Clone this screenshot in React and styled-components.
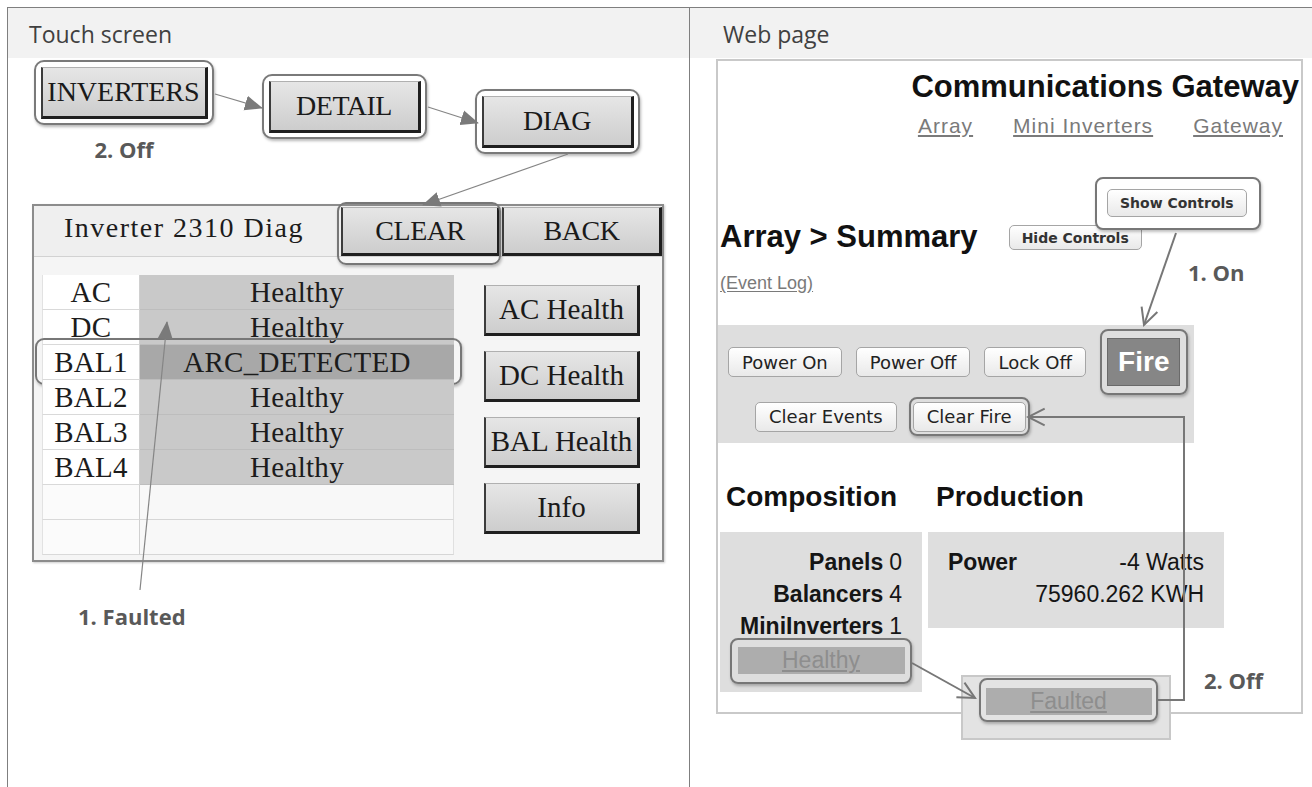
import React from "react";
import styled, { createGlobalStyle } from "styled-components";

const Global = createGlobalStyle`
  html, body { margin: 0; padding: 0; background: #fff; }
  body { overflow: hidden; font-family: "Open Sans", "Liberation Sans", sans-serif; }
`;

const Figure = styled.div`
  position: relative;
  margin: 7px 0 0 7px;
  width: 1305px;
  height: 790px;
  border-top: 1px solid #7f7f7f;
  border-left: 1px solid #7f7f7f;
  display: grid;
  grid-template-columns: 681px 1fr;
  grid-template-rows: 50px 1fr;
`;

const HeadCell = styled.div`
  background: #f2f2f2;
  color: #404040;
  font: 400 23px/48px "Open Sans", sans-serif;
  padding: 2px 0 0 ${(p) => p.$pad}px;
  box-sizing: border-box;
  border-left: ${(p) => (p.$divider ? "1px solid #7f7f7f" : "none")};
`;

/* ---------- touch screen column ---------- */
const TouchCell = styled.div`
  padding-top: 2px;
  display: flex;
  flex-direction: column;
  align-items: flex-start;
`;

const StepRow = styled.div`
  display: flex;
  align-items: flex-start;
  gap: 48px;
  padding-left: 26px;
`;

const StepCol = styled.div`
  display: flex;
  flex-direction: column;
  align-items: center;
  margin-top: ${(p) => p.$drop || 0}px;
`;

const Ring = styled.div`
  border: 2.5px solid #7a7a7a;
  border-radius: 10px;
  padding: 4.5px;
  background: #fff;
  box-shadow: 1px 2px 3px rgba(0, 0, 0, 0.28);
`;

const BevelButton = styled.div`
  box-sizing: border-box;
  display: flex;
  align-items: center;
  justify-content: center;
  background: linear-gradient(#e6e6e6, #cdcdcd);
  border-style: solid;
  border-width: 1px 3px 3px 2px;
  border-color: #b0b0b0 #1f1f1f #1f1f1f #3c3c3c;
  font-family: "Liberation Serif", "Times New Roman", serif;
  font-size: ${(p) => p.$fs || 28}px;
  letter-spacing: ${(p) => p.$ls ?? 0}px;
  color: #1a1a1a;
  white-space: nowrap;
`;

const StepButton = styled(BevelButton)`
  width: ${(p) => p.$w}px;
  height: 52px;
`;

const Callout = styled.div`
  font: 700 22px/1 "Open Sans", sans-serif;
  color: #595959;
  margin-top: ${(p) => p.$mt || 0}px;
  margin-left: ${(p) => p.$ml || 0}px;
`;

const FloatCallout = styled(Callout)`
  position: absolute;
  left: ${(p) => p.$x}px;
  top: ${(p) => p.$y}px;
  margin: 0;
`;

const Panel = styled.div`
  margin: 44px 0 0 24px;
  width: 632px;
  height: 358px;
  box-sizing: border-box;
  border: 2px solid #8c8c8c;
  background: #f5f5f5;
  display: flex;
  flex-direction: column;
  font-family: "Liberation Serif", "Times New Roman", serif;
  color: #1c1c1c;
  box-shadow: 1px 1px 2px rgba(0, 0, 0, 0.2);
`;

const PanelHead = styled.div`
  display: grid;
  grid-template-columns: 307px 159px 1fr;
  height: 51px;
  box-sizing: border-box;
  border-bottom: 1px solid #d2d2d2;
  background: #efefef;
`;

const PanelTitle = styled.div`
  padding: 8px 0 0 30px;
  font-size: 28px;
  line-height: 1;
  letter-spacing: 1.5px;
`;

const HeadSlot = styled.div`
  position: relative;
  padding: 1px 0 0 ${(p) => p.$gap || 0}px;
`;

const HeadButton = styled(BevelButton)`
  height: 49px;
`;

const OverRing = styled.div`
  position: absolute;
  top: ${(p) => p.$t}px;
  right: ${(p) => p.$r}px;
  bottom: ${(p) => p.$b}px;
  left: ${(p) => p.$l}px;
  border: 2.5px solid #777;
  border-radius: 9px;
  box-shadow: 1px 2px 3px rgba(0, 0, 0, 0.25);
  pointer-events: none;
`;

const PanelBody = styled.div`
  display: flex;
  padding: 18px 0 0 8px;
`;

const DiagTable = styled.div`
  width: 412px;
  display: flex;
  flex-direction: column;
`;

const DiagRow = styled.div`
  position: relative;
  display: grid;
  grid-template-columns: 98px 1fr;
  height: 35px;
  font-size: 29px;
  line-height: 34px;
  letter-spacing: 0.3px;
  text-align: center;
`;

const LabelCell = styled.div`
  background: ${(p) => (p.$blank ? "#fbfbfb" : "#fff")};
  border-right: 1px solid #d0d0d0;
  border-bottom: 1px solid #d9d9d9;
  border-left: 1px solid #e2e2e2;
`;

const toneBg = { ok: "#c9c9c9", alarm: "#a8a8a8", none: "#f8f8f8" };

const ValueCell = styled.div`
  background: ${(p) => toneBg[p.$tone]};
  border-bottom: 1px solid ${(p) => (p.$tone === "none" ? "#d6d6d6" : "#bdbdbd")};
  border-right: ${(p) => (p.$tone === "none" ? "1px solid #e0e0e0" : "none")};
`;

const SideCol = styled.div`
  display: flex;
  flex-direction: column;
  gap: 15px;
  margin-left: 30px;
  padding-top: 10px;
`;

const SideButton = styled(BevelButton)`
  width: 156px;
  height: 51px;
`;

/* ---------- web page column ---------- */
const WebCell = styled.div`
  border-left: 1px solid #7f7f7f;
  padding: 1px 0 0 26px;
`;

const Frame = styled.div`
  position: relative;
  width: 587px;
  height: 655px;
  box-sizing: border-box;
  border: 2px solid #c9c9c9;
  background: #fff;
  font-family: "Liberation Sans", Arial, sans-serif;
  color: #111;
  display: flex;
  flex-direction: column;
`;

const SiteTitle = styled.div`
  align-self: flex-end;
  margin: 10px 2px 0 0;
  font: 700 31px/1 "Liberation Sans", Arial, sans-serif;
`;

const Nav = styled.div`
  display: flex;
  justify-content: flex-end;
  gap: 40px;
  margin-top: 13px;
  padding-right: 18px;
`;

const Link = styled.span`
  font-size: ${(p) => p.$size || 21}px;
  line-height: 1;
  letter-spacing: ${(p) => (p.$wide ? 1 : 0)}px;
  color: #7a7a7a;
  text-decoration: underline;
  text-underline-offset: 2px;
`;

const SummaryRow = styled.div`
  display: flex;
  align-items: flex-start;
  gap: 31px;
  margin-top: 85px;
  padding-left: 2px;
`;

const SummaryTitle = styled.div`
  font: 700 31px/1 "Liberation Sans", Arial, sans-serif;
`;

const WebButton = styled.div`
  box-sizing: border-box;
  display: inline-flex;
  align-items: center;
  justify-content: center;
  height: ${(p) => p.$h || 30}px;
  margin-top: ${(p) => p.$mt || 0}px;
  padding: 0 ${(p) => p.$px || 13}px;
  border: 1px solid #a5a5a5;
  border-radius: 5px;
  background: linear-gradient(#ffffff, #e9e9e9);
  font-family: "DejaVu Sans", sans-serif;
  font-size: ${(p) => p.$fs || 18}px;
  font-weight: ${(p) => (p.$bold ? 700 : 400)};
  color: ${(p) => (p.$bold ? "#333" : "#222")};
  white-space: nowrap;
`;

const ShowRing = styled.div`
  position: absolute;
  left: 377px;
  top: 116px;
  border: 2.5px solid #777;
  border-radius: 8px;
  padding: 10px 12px 11px 10px;
  background: #fff;
  box-shadow: 1px 2px 3px rgba(0, 0, 0, 0.25);
`;

const EventLog = styled.div`
  margin-top: 22px;
  padding-left: 2px;
`;

const ControlsBox = styled.div`
  margin-top: 32px;
  width: 476px;
  background: #dedede;
  padding: 4px 0 7px 10px;
  box-sizing: border-box;
  display: flex;
  flex-direction: column;
  gap: 2px;
`;

const ControlRow = styled.div`
  display: flex;
  align-items: center;
  gap: ${(p) => p.$gap}px;
  padding-left: ${(p) => p.$indent || 0}px;
`;

const WebRing = styled.div`
  border: 2.5px solid #777;
  border-radius: 8px;
  padding: ${(p) => p.$pad};
  box-shadow: 1px 2px 3px rgba(0, 0, 0, 0.25);
`;

const FireButton = styled.div`
  width: 73px;
  height: 48px;
  box-sizing: border-box;
  display: flex;
  align-items: center;
  justify-content: center;
  background: #868686;
  border: 1px solid #6a6a6a;
  color: #fff;
  font: 700 28px/1 "Liberation Sans", Arial, sans-serif;
`;

const SectionGrid = styled.div`
  margin-top: 40px;
  padding-left: 2px;
  display: grid;
  grid-template-columns: 202px 296px;
  column-gap: 6px;
  row-gap: 21px;
  align-items: start;
`;

const SectionHead = styled.div`
  font: 700 28px/1 "Liberation Sans", Arial, sans-serif;
  padding-left: ${(p) => p.$pad}px;
`;

const StatBox = styled.div`
  background: #dedede;
  padding: ${(p) => p.$pad};
  display: flex;
  flex-direction: column;
`;

const StatLine = styled.div`
  display: flex;
  justify-content: ${(p) => p.$justify || "flex-end"};
  gap: 6px;
  padding-right: ${(p) => p.$pr || 0}px;
  font-size: 23px;
  line-height: 32px;
  color: #151515;
  b { font-weight: 700; }
`;

const StatusRing = styled.div`
  margin-top: ${(p) => p.$mt || 0}px;
  width: ${(p) => (p.$w ? `${p.$w}px` : "auto")};
  box-sizing: border-box;
  border: 2.5px solid #777;
  border-radius: 8px;
  padding: ${(p) => p.$pad};
  box-shadow: 1px 2px 3px rgba(0, 0, 0, 0.25);
`;

const StatusBar = styled.div`
  height: 27px;
  background: #adadad;
  text-align: center;
  font-size: 23px;
  line-height: 27px;
  color: #8e8e8e;
  text-decoration: underline;
`;

const FaultBox = styled.div`
  position: absolute;
  left: 243px;
  top: 614px;
  width: 210px;
  height: 65px;
  box-sizing: border-box;
  background: #e3e3e3;
  border: 2px solid #c8c8c8;
  padding: 1px 0 0 16px;
`;

const Overlay = styled.svg`
  position: absolute;
  left: 0;
  top: 0;
  pointer-events: none;
  overflow: visible;
`;

const rows = [
  ["AC", "Healthy", "ok"],
  ["DC", "Healthy", "ok"],
  ["BAL1", "ARC_DETECTED", "alarm"],
  ["BAL2", "Healthy", "ok"],
  ["BAL3", "Healthy", "ok"],
  ["BAL4", "Healthy", "ok"],
  ["", "", "none"],
  ["", "", "none"],
];

function Arrows() {
  const thin = { stroke: "#858585", strokeWidth: 1.2, fill: "none" };
  const thick = { stroke: "#777", strokeWidth: 2, fill: "none" };
  return (
    <Overlay width="1304" height="779" viewBox="8 8 1304 779">
      <defs>
        <marker id="solidHead" viewBox="0 0 10 10" refX="9.5" refY="5" markerWidth="18" markerHeight="18" markerUnits="userSpaceOnUse" orient="auto">
          <path d="M0,0.8 L10,5 L0,9.2 z" fill="#7a7a7a" />
        </marker>
        <marker id="openHead" viewBox="0 0 12 12" refX="11" refY="6" markerWidth="20" markerHeight="20" markerUnits="userSpaceOnUse" orient="auto">
          <path d="M1,1 L11,6 L1,11" fill="none" stroke="#777" strokeWidth="1.2" />
        </marker>
      </defs>
      <line x1="215" y1="94" x2="262" y2="108" {...thin} markerEnd="url(#solidHead)" />
      <line x1="428" y1="107" x2="478" y2="123" {...thin} markerEnd="url(#solidHead)" />
      <line x1="568" y1="154" x2="423" y2="205" {...thin} markerEnd="url(#solidHead)" />
      <line x1="140" y1="590" x2="167" y2="322" {...thin} markerEnd="url(#solidHead)" />
      <line x1="1176" y1="233" x2="1144" y2="325" {...thick} markerEnd="url(#openHead)" />
      <line x1="912" y1="663" x2="975" y2="698" {...thick} markerEnd="url(#openHead)" />
      <polyline points="1158,700 1184,700 1184,417 1028,417" {...thick} markerEnd="url(#openHead)" />
    </Overlay>
  );
}

export default function App() {
  return (
    <>
      <Global />
      <Figure>
        <HeadCell $pad={21}>Touch screen</HeadCell>
        <HeadCell $pad={33} $divider>Web page</HeadCell>

        <TouchCell>
          <StepRow>
            <StepCol>
              <Ring>
                <StepButton $w={167}>INVERTERS</StepButton>
              </Ring>
              <Callout $mt={13}>2. Off</Callout>
            </StepCol>
            <StepCol $drop={14}>
              <Ring>
                <StepButton $w={152} $ls={-0.5}>DETAIL</StepButton>
              </Ring>
            </StepCol>
            <StepCol $drop={29}>
              <Ring>
                <StepButton $w={152} $ls={-0.5}>DIAG</StepButton>
              </Ring>
            </StepCol>
          </StepRow>

          <Panel>
            <PanelHead>
              <PanelTitle>Inverter 2310 Diag</PanelTitle>
              <HeadSlot>
                <HeadButton $ls={-0.5}>CLEAR</HeadButton>
                <OverRing $t={-4} $r={-1} $b={-9} $l={-4} />
              </HeadSlot>
              <HeadSlot $gap={2}>
                <HeadButton $ls={-0.5}>BACK</HeadButton>
              </HeadSlot>
            </PanelHead>
            <PanelBody>
              <DiagTable>
                {rows.map(([label, value, tone], i) => (
                  <DiagRow key={i}>
                    <LabelCell $blank={tone === "none"}>{label}</LabelCell>
                    <ValueCell $tone={tone}>{value}</ValueCell>
                    {tone === "alarm" && <OverRing $t={-7} $r={-8} $b={-5} $l={-7} />}
                  </DiagRow>
                ))}
              </DiagTable>
              <SideCol>
                <SideButton $fs={29}>AC Health</SideButton>
                <SideButton $fs={29}>DC Health</SideButton>
                <SideButton $fs={29}>BAL Health</SideButton>
                <SideButton $fs={29}>Info</SideButton>
              </SideCol>
            </PanelBody>
          </Panel>

          <Callout $mt={43} $ml={70}>1. Faulted</Callout>
        </TouchCell>

        <WebCell>
          <Frame>
            <SiteTitle>Communications Gateway</SiteTitle>
            <Nav>
              <Link $wide>Array</Link>
              <Link $wide>Mini Inverters</Link>
              <Link $wide>Gateway</Link>
            </Nav>

            <ShowRing>
              <WebButton $h={28} $px={12} $fs={14} $bold>Show Controls</WebButton>
            </ShowRing>

            <SummaryRow>
              <SummaryTitle>Array &gt; Summary</SummaryTitle>
              <WebButton $h={25} $px={12} $fs={14} $mt={4} $bold>Hide Controls</WebButton>
            </SummaryRow>

            <EventLog>
              <Link $size={18}>(Event Log)</Link>
            </EventLog>

            <FloatCallout $x={470} $y={200}>1. On</FloatCallout>

            <ControlsBox>
              <ControlRow $gap={14}>
                <WebButton>Power On</WebButton>
                <WebButton>Power Off</WebButton>
                <WebButton>Lock Off</WebButton>
                <WebRing $pad="7px 5.5px">
                  <FireButton>Fire</FireButton>
                </WebRing>
              </ControlRow>
              <ControlRow $gap={12} $indent={27}>
                <WebButton>Clear Events</WebButton>
                <WebRing $pad="2.5px 2px">
                  <WebButton>Clear Fire</WebButton>
                </WebRing>
              </ControlRow>
            </ControlsBox>

            <SectionGrid>
              <SectionHead $pad={6}>Composition</SectionHead>
              <SectionHead $pad={8}>Production</SectionHead>
              <StatBox $pad="13.5px 10px 8px">
                <StatLine $pr={10}><b>Panels</b>0</StatLine>
                <StatLine $pr={10}><b>Balancers</b>4</StatLine>
                <StatLine $pr={10}><b>MiniInverters</b>1</StatLine>
                <StatusRing $mt={-4} $pad="7.5px 5.5px">
                  <StatusBar>Healthy</StatusBar>
                </StatusRing>
              </StatBox>
              <StatBox $pad="13.5px 20px 18.5px">
                <StatLine $justify="space-between"><b>Power</b><span>-4 Watts</span></StatLine>
                <StatLine>75960.262 KWH</StatLine>
              </StatBox>
            </SectionGrid>

            <FaultBox>
              <StatusRing $w={179} $pad="7.5px 4.5px 5.5px">
                <StatusBar>Faulted</StatusBar>
              </StatusRing>
            </FaultBox>

            <FloatCallout $x={486} $y={608}>2. Off</FloatCallout>
          </Frame>
        </WebCell>

        <Arrows />
      </Figure>
    </>
  );
}
